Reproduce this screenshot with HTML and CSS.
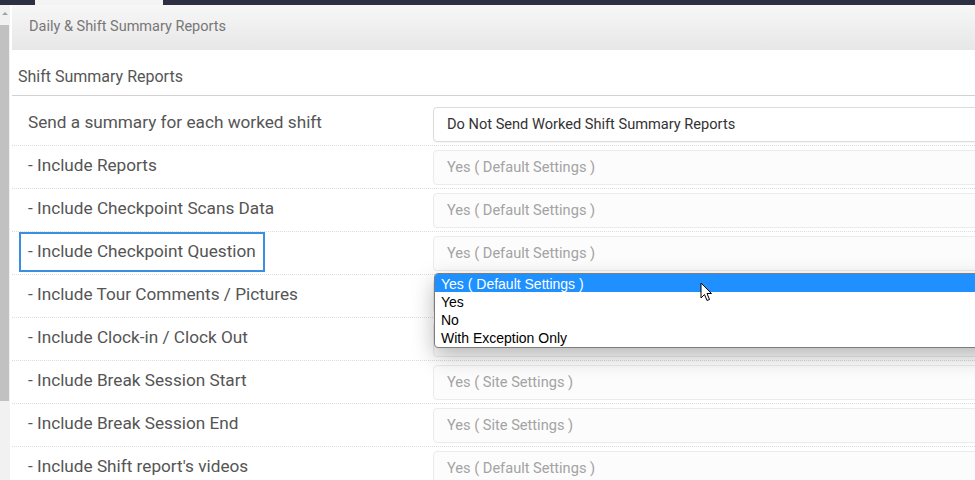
FILE: index.html
```html
<!DOCTYPE html>
<html lang="en">
<head>
<meta charset="utf-8">
<title>Daily &amp; Shift Summary Reports</title>
<link rel="stylesheet" href="styles.css">
</head>
<body>
<div class="topbar"><span class="topbar-tab"></span></div>
<div class="main">
  <div class="scrollbar">
    <div class="scroll-arrow"><span class="tri"></span></div>
    <div class="scroll-thumb"></div>
  </div>
  <div class="content">
    <div class="page-header">Daily &amp; Shift Summary Reports</div>
    <div class="section-title">Shift Summary Reports</div>
    <div class="rows">
      <div class="row">
        <div class="label-cell"><span class="label">Send a summary for each worked shift</span></div>
        <div class="field-cell"><div class="select active">Do Not Send Worked Shift Summary Reports</div></div>
      </div>
      <div class="row">
        <div class="label-cell"><span class="label">- Include Reports</span></div>
        <div class="field-cell"><div class="select">Yes ( Default Settings )</div></div>
      </div>
      <div class="row">
        <div class="label-cell"><span class="label">- Include Checkpoint Scans Data</span></div>
        <div class="field-cell"><div class="select">Yes ( Default Settings )</div></div>
      </div>
      <div class="row">
        <div class="label-cell"><span class="label focused">- Include Checkpoint Question</span></div>
        <div class="field-cell">
          <div class="select">Yes ( Default Settings )</div>
          <ul class="dropdown">
            <li class="option selected">Yes ( Default Settings )</li>
            <li class="option">Yes</li>
            <li class="option">No</li>
            <li class="option">With Exception Only</li>
            <svg class="cursor" width="13" height="21" viewBox="0 0 13 21"><path d="M1 1 L1 16 L4.5 12.5 L7 18.5 L9.5 17.5 L7 11.5 L11.5 11.5 Z" fill="#fff" stroke="#000" stroke-width="1" stroke-linejoin="round"/></svg>
          </ul>
        </div>
      </div>
      <div class="row">
        <div class="label-cell"><span class="label">- Include Tour Comments / Pictures</span></div>
        <div class="field-cell"><div class="select">Yes ( Default Settings )</div></div>
      </div>
      <div class="row">
        <div class="label-cell"><span class="label">- Include Clock-in / Clock Out</span></div>
        <div class="field-cell"><div class="select">Yes ( Default Settings )</div></div>
      </div>
      <div class="row">
        <div class="label-cell"><span class="label">- Include Break Session Start</span></div>
        <div class="field-cell"><div class="select">Yes ( Site Settings )</div></div>
      </div>
      <div class="row">
        <div class="label-cell"><span class="label">- Include Break Session End</span></div>
        <div class="field-cell"><div class="select">Yes ( Site Settings )</div></div>
      </div>
      <div class="row">
        <div class="label-cell"><span class="label">- Include Shift report's videos</span></div>
        <div class="field-cell"><div class="select">Yes ( Default Settings )</div></div>
      </div>
    </div>
  </div>
</div>
</body>
</html>
```
FILE: styles.css
```css
html, body {
  margin: 0;
  padding: 0;
}

body {
  width: 975px;
  height: 480px;
  overflow: hidden;
  background: #fff;
  font-family: Roboto, "Noto Sans", sans-serif;
}

/* dark strip along the top with the current tab */
.topbar {
  height: 5px;
  background: #2d3043;
  display: flex;
}

.topbar-tab {
  margin-left: 35px;
  width: 128px;
  background: #f4f4f4;
}

.main {
  display: flex;
  height: 475px;
}

/* window scrollbar on the left */
.scrollbar {
  width: 10px;
  flex: none;
  background: #f1f1f1;
  display: flex;
  flex-direction: column;
}

.scroll-arrow {
  height: 20px;
  display: flex;
  justify-content: center;
  padding-top: 7px;
  box-sizing: border-box;
}

.tri {
  width: 0;
  height: 0;
  border-left: 3px solid transparent;
  border-right: 3px solid transparent;
  border-bottom: 3px solid #a3a3a3;
}

.scroll-thumb {
  width: 9px;
  height: 376px;
  background: #c1c1c1;
}

.content {
  flex: 1;
  margin-left: 2px;
  min-width: 0;
}

.page-header {
  height: 45px;
  line-height: 44px;
  padding-left: 17px;
  font-size: 14.5px;
  color: #777;
  background: linear-gradient(#f7f7f7, #e7e7e7);
}

.section-title {
  height: 46px;
  box-sizing: border-box;
  padding: 8px 0 0 6px;
  display: flex;
  align-items: center;
  font-size: 16px;
  color: #555;
  border-bottom: 1px solid #d2d2d2;
}

.rows {
  padding-top: 7px;
}

.row {
  display: grid;
  grid-template-columns: 421px 600px;
  height: 43px;
  box-sizing: border-box;
  border-bottom: 1px dotted #dcdcdc;
}

.label-cell {
  padding-left: 7px;
  display: flex;
  align-items: flex-start;
}

.label {
  display: inline-block;
  height: 40px;
  line-height: 35px;
  box-sizing: border-box;
  padding: 0 7px;
  border: 2px solid transparent;
  font-size: 17.2px;
  color: #555;
  white-space: nowrap;
}

.label.focused {
  border-color: #3b8fe2;
}

.field-cell {
  position: relative;
  padding-top: 4px;
}

.select {
  height: 35px;
  box-sizing: border-box;
  line-height: 33px;
  padding-left: 13px;
  font-size: 14.6px;
  color: #a3a3a3;
  background: #fcfcfc;
  border: 1px solid #ebebeb;
  border-radius: 4px;
}

.select.active {
  color: #333;
  background: #fff;
  border-color: #dcdcdc;
  box-shadow: 0 1px 1px rgba(0, 0, 0, 0.04);
}

/* open option list of the focused select */
.dropdown {
  position: absolute;
  z-index: 10;
  left: 1px;
  top: 41px;
  width: 600px;
  margin: 0;
  padding: 0 0 1px;
  list-style: none;
  background: #fff;
  border: 1px solid #7d7d7d;
  border-radius: 4px;
  box-shadow: 0 8px 22px rgba(0, 0, 0, 0.28);
  font-family: "Liberation Sans", Arial, sans-serif;
  font-size: 14px;
  color: #000;
}

.option {
  height: 18px;
  line-height: 20px;
  padding-left: 6px;
}

.option.selected {
  background: #1e90ff;
  color: #fff;
  border-radius: 3px 0 0 0;
}

.cursor {
  position: absolute;
  left: 265px;
  top: 8px;
}
```
